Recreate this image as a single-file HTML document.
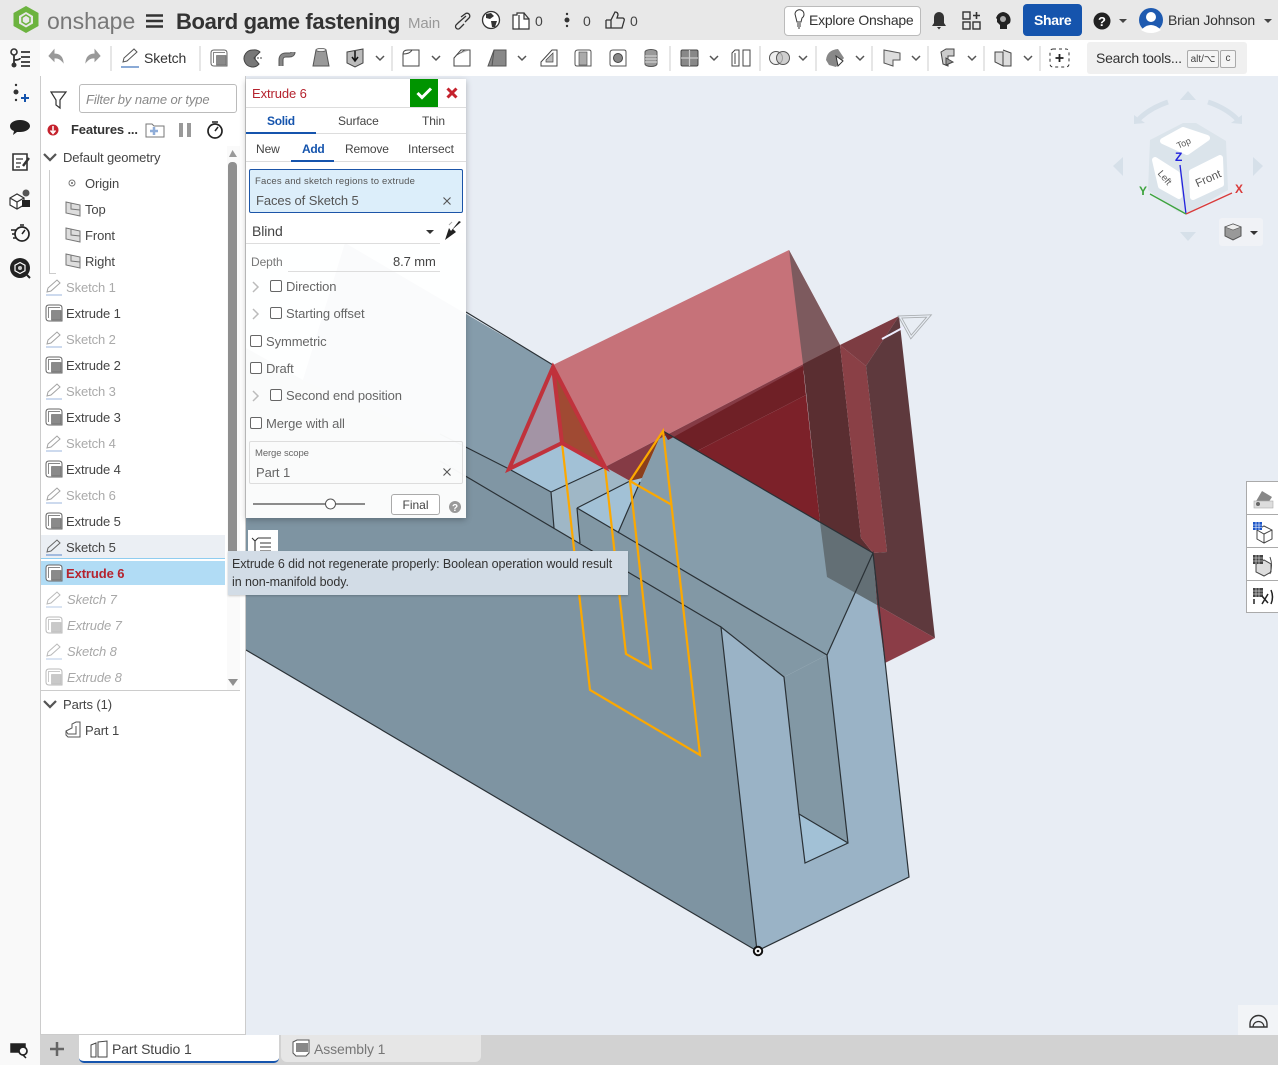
<!DOCTYPE html>
<html><head><meta charset="utf-8">
<style>
html,body{margin:0;padding:0;width:1278px;height:1065px;overflow:hidden;background:#e8edf4;font-family:"Liberation Sans",sans-serif;color:#444}
.a{position:absolute}
.t{position:absolute;white-space:nowrap;line-height:16px;font-size:13px;letter-spacing:-.1px}
.g{color:#aaa}.i{color:#a8a8a8;font-style:italic}
.cb{position:absolute;width:10px;height:10px;border:1px solid #666;border-radius:2px;background:#fff}
svg{position:absolute;left:0;top:0}
</style></head><body>

<svg width="1278" height="1065" viewBox="0 0 1278 1065">
<polygon points="345,243 553,365 509,469 551,492 554,528 721,627 757,951 246,650 246,348 303,380" fill="#7e94a2"/>
<polygon points="345,243 553,365 509,469 303,380" fill="#859cab"/>
<polygon points="466,447 509,469 551,492 554,528 466,476" fill="#8096a4"/>
<polygon points="551,492 605,467 630,481 577,508 580,543 554,528" fill="#9fb7c6"/>
<polygon points="509,469 562,443 605,467 551,492" fill="#a2c1d6"/>
<polygon points="577,508 630,481 645,475 618,533" fill="#a2c1d6"/>
<polygon points="577,508 827,655 784,677 721,627 580,543" fill="#8298a5"/>
<polygon points="663,430 873,553 827,655 618,533" fill="#869dab"/>
<polygon points="721,627 784,677 799,814 805,863 848,843 827,655 873,553 909,877 757,951" fill="#9ab3c6"/>
<polygon points="784,677 827,655 848,843 799,814" fill="#8298a5"/>
<polygon points="799,814 848,843 805,863" fill="#a2c1d6"/>
<!-- red body -->
<polygon points="553,365 789,250 840,345 605,467" fill="#c67279"/>
<polygon points="789,250 840,345 803,364" fill="#7d5a5e"/>
<polygon points="605,467 840,345 840,352 668,440 663,431 630,481" fill="#853b45"/>
<polygon points="668,440 803,366 806,395 697,451 663,431" fill="#6f2026"/>
<polygon points="697,451 806,395 820,522" fill="#7c2129"/>
<polygon points="803,364 840,345 861,538 873,553 820,522" fill="#5a2e31"/>
<polygon points="840,345 866,366 887,552 873,553 861,538" fill="#8a4046"/>
<polygon points="840,345 899,316 866,366" fill="#7d3c42"/>
<polygon points="899,316 935,638 877,605 873,553 887,552 866,366" fill="#5e393d"/>
<polygon points="877,605 935,638 885,663" fill="#8b3d47"/>
<polygon points="820,522 873,553 877,605 827,577" fill="#636f75"/>
<polygon points="630,481 663,430 642,478" fill="#8b3f1c"/>
<polygon points="553,365 509,469 562,443" fill="#a394a5"/>
<polygon points="553,365 562,443 605,467" fill="#a04a33"/>
<!-- edges -->
<g fill="none" stroke="#2a3136" stroke-width="1.2">
<path d="M246 650L757 951L909 877L873 553L827 655L848 843L805 863L799 814L784 677L721 627L757 951"/>
<path d="M466 312L553 365M440 434L509 469L551 492L605 467M551 492L554 528M440 461L721 627"/>
<path d="M577 508L630 481M577 508L580 543M577 508L827 655M618 533L640 482M663 431L873 553M799 814L848 843"/>
</g>
<!-- sketch -->
<g fill="none" stroke="#fca800" stroke-width="2.2">
<path d="M562 443L590 690L700 755L663 431L630 481L672 505"/>
<path d="M605 467L626 654L651 668L630 481"/>
</g>
<path d="M553 367L509 469L562 443L605 467Z M553 367L562 443" fill="none" stroke="#c0323c" stroke-width="4"/>
<circle cx="758" cy="951" r="4.2" fill="#fff" stroke="#111" stroke-width="2"/><circle cx="758" cy="951" r="1.3" fill="#111"/>
<!-- manipulator -->
<path d="M882 339L906 326" stroke="#eef" stroke-width="2"/>
<path d="M900 317L929 316L911 337Z" fill="none" stroke="#a9adb0" stroke-width="3"/>
<path d="M900 317L929 316L911 337Z" fill="none" stroke="#e8edf4" stroke-width="1.3"/>
<!-- nav cube -->
<g fill="#d6e0e9">
<path d="M1188 91L1180 100H1196ZM1188 241L1180 232H1196ZM1113 166L1123 157V176ZM1263 166L1253 157V176Z"/>
<path d="M1134 124V115L1145 123ZM1242 124V115L1231 123Z"/>
<polygon points="1150,140 1183,123 1196,123 1226,141 1228,190 1190,212 1178,212 1148,190" fill="#dbe4eb"/>
</g>
<path d="M1168 102Q1150 108 1139 119M1208 102Q1226 108 1237 119" fill="none" stroke="#d6e0e9" stroke-width="5"/>
<g fill="#fff" stroke="#fff" stroke-width="6" stroke-linejoin="round">
<path d="M1163 141L1183 130L1207 138L1187 152Z"/>
<path d="M1155 160L1177 174L1179 196L1161 186Z"/>
<path d="M1192 172L1220 158L1221 184L1193 197Z"/>
</g>
<text x="1176" y="146" font-size="9" fill="#555" transform="rotate(-24 1184 142)" font-family="Liberation Sans">Top</text>
<text x="1157" y="180" font-size="9.5" fill="#555" transform="rotate(50 1164 177)" font-family="Liberation Sans">Left</text>
<text x="1194" y="183" font-size="11.5" fill="#555" transform="rotate(-24 1206 177)" font-family="Liberation Sans">Front</text>
<path d="M1186 214L1180 165" stroke="#2222dd" stroke-width="1.3"/><path d="M1186 214L1232 193" stroke="#d93a3a" stroke-width="1.3"/><path d="M1186 214L1150 194" stroke="#3da33d" stroke-width="1.3"/>
<text x="1175" y="161" font-size="12" font-weight="bold" fill="#2222dd" font-family="Liberation Sans">Z</text>
<text x="1235" y="193" font-size="12" font-weight="bold" fill="#d93a3a" font-family="Liberation Sans">X</text>
<text x="1139" y="195" font-size="12" font-weight="bold" fill="#3da33d" font-family="Liberation Sans">Y</text>
<rect x="1219" y="218" width="44" height="28" rx="3" fill="#f0f2f6"/>
<path d="M1233 224L1241 227V236L1233 240L1225 236V227Z" fill="#999" stroke="#555"/><path d="M1225 227L1233 230L1241 227L1233 224Z" fill="#eee" stroke="#555" stroke-width=".6"/>
<path d="M1250 231H1258L1254 235Z" fill="#333"/>
</svg>

<!-- top bar -->
<div class="a" style="left:0;top:0;width:1278px;height:40px;background:#e8e8e8"></div>
<div class="a" style="left:0;top:40px;width:1278px;height:36px;background:#fff"></div>
<div class="a" style="left:0;top:40px;width:40px;height:1025px;background:#f9f9f9"></div>
<div class="t" style="left:47px;top:8px;font-size:23px;line-height:26px;color:#777;letter-spacing:0">onshape</div>
<div class="t" style="left:176px;top:9px;font-size:22px;line-height:26px;font-weight:bold;color:#333;letter-spacing:-.35px">Board game fastening</div>
<div class="t" style="left:408px;top:16px;font-size:15px;color:#999">Main</div>
<div class="t" style="left:535px;top:13px;font-size:14px;color:#444">0</div>
<div class="t" style="left:583px;top:13px;font-size:14px;color:#444">0</div>
<div class="t" style="left:630px;top:13px;font-size:14px;color:#444">0</div>
<div class="a" style="left:784px;top:6px;width:135px;height:28px;background:#fff;border:1px solid #bbb;border-radius:4px"></div>
<div class="t" style="left:809px;top:12px;font-size:14px;color:#333;letter-spacing:-.25px">Explore Onshape</div>
<div class="a" style="left:1023px;top:4px;width:59px;height:32px;background:#1554ad;border-radius:4px"></div>
<div class="t" style="left:1034px;top:12px;font-size:14px;color:#fff;font-weight:bold;letter-spacing:-.3px">Share</div>
<div class="t" style="left:1168px;top:12px;font-size:14px;color:#333;letter-spacing:-.2px">Brian Johnson</div>
<div class="t" style="left:144px;top:50px;font-size:14px;color:#333;letter-spacing:-.1px">Sketch</div>
<div class="a" style="left:1087px;top:42px;width:160px;height:32px;background:#f0f0f0;border-radius:3px"></div>
<div class="t" style="left:1096px;top:50px;font-size:14px;color:#333;letter-spacing:-.25px">Search tools...</div>
<div class="a" style="left:1187px;top:50px;width:32px;height:18px;background:#f4f4f4;border:1px solid #aaa;border-radius:2px;box-sizing:border-box;font-size:10px;line-height:17px;text-align:center;color:#444">alt/⌥</div>
<div class="a" style="left:1220px;top:50px;width:16px;height:18px;background:#f4f4f4;border:1px solid #aaa;border-radius:2px;box-sizing:border-box;font-size:10px;line-height:16px;text-align:center;color:#444">c</div>

<!-- feature panel -->
<div class="a" style="left:40px;top:76px;width:206px;height:959px;background:#fff;border-left:1px solid #ccc;border-right:1px solid #ccc;border-bottom:1px solid #ccc;box-sizing:border-box"></div>
<div class="a" style="left:79px;top:84px;width:158px;height:29px;border:1px solid #bbb;border-radius:3px;box-sizing:border-box"></div>
<div class="t" style="left:86px;top:92px;font-style:italic;color:#888">Filter by name or type</div>
<div class="t" style="left:71px;top:122px;font-size:13px;color:#333;font-weight:bold;letter-spacing:-.15px">Features ...</div>
<div class="a" style="left:227px;top:146px;width:13px;height:544px;background:#fafafa"></div>
<div class="a" style="left:228px;top:162px;width:9px;height:395px;background:#8f8f8f;border-radius:4px 4px 0 0"></div>
<div class="a" style="left:41px;top:535px;width:184px;height:23px;background:#ebeff4"></div>
<div class="a" style="left:41px;top:558px;width:184px;height:1px;background:#8fcdf0"></div>
<div class="a" style="left:41px;top:561px;width:184px;height:24px;background:#b1dcf5"></div>
<div class="a" style="left:41px;top:690px;width:199px;height:1px;background:#ccc"></div>
<div class="a" style="left:49px;top:170px;width:1px;height:104px;background:#ccc"></div>
<div class="a" style="left:49px;top:273px;width:7px;height:1px;background:#ccc"></div>
<div class="t" style="left:63px;top:150px">Default geometry</div>
<div class="t" style="left:85px;top:176px">Origin</div>
<div class="t" style="left:85px;top:202px">Top</div>
<div class="t" style="left:85px;top:228px">Front</div>
<div class="t" style="left:85px;top:254px">Right</div>
<div class="t g" style="left:66px;top:280px">Sketch 1</div>
<div class="t" style="left:66px;top:306px">Extrude 1</div>
<div class="t g" style="left:66px;top:332px">Sketch 2</div>
<div class="t" style="left:66px;top:358px">Extrude 2</div>
<div class="t g" style="left:66px;top:384px">Sketch 3</div>
<div class="t" style="left:66px;top:410px">Extrude 3</div>
<div class="t g" style="left:66px;top:436px">Sketch 4</div>
<div class="t" style="left:66px;top:462px">Extrude 4</div>
<div class="t g" style="left:66px;top:488px">Sketch 6</div>
<div class="t" style="left:66px;top:514px">Extrude 5</div>
<div class="t" style="left:66px;top:540px">Sketch 5</div>
<div class="t" style="left:66px;top:566px;color:#b5232e;font-weight:bold">Extrude 6</div>
<div class="t i" style="left:67px;top:592px">Sketch 7</div>
<div class="t i" style="left:67px;top:618px">Extrude 7</div>
<div class="t i" style="left:67px;top:644px">Sketch 8</div>
<div class="t i" style="left:67px;top:670px">Extrude 8</div>
<div class="t" style="left:63px;top:697px">Parts (1)</div>
<div class="t" style="left:85px;top:723px">Part 1</div>

<!-- dialog -->
<div class="a" style="left:246px;top:79px;width:220px;height:439px;background:rgba(255,255,255,.96);box-shadow:0 2px 6px rgba(0,0,0,.25)"></div>
<div class="a" style="left:246px;top:79px;width:220px;height:164px;background:#fff"></div>
<div class="a" style="left:410px;top:79px;width:28px;height:28px;background:#009400"></div>
<div class="a" style="left:246px;top:107px;width:220px;height:1px;background:#ddd"></div>
<div class="a" style="left:246px;top:133px;width:220px;height:1px;background:#ddd"></div>
<div class="a" style="left:246px;top:132px;width:70px;height:2px;background:#1554ad"></div>
<div class="a" style="left:246px;top:161px;width:220px;height:1px;background:#ddd"></div>
<div class="a" style="left:291px;top:160px;width:43px;height:2px;background:#1554ad"></div>
<div class="t" style="left:252px;top:86px;color:#b5232e">Extrude 6</div>
<div class="t" style="left:267px;top:113px;font-size:12px;color:#1554ad;font-weight:bold;letter-spacing:-.3px">Solid</div>
<div class="t" style="left:338px;top:113px;font-size:12px;letter-spacing:-.1px">Surface</div>
<div class="t" style="left:422px;top:113px;font-size:12px">Thin</div>
<div class="t" style="left:256px;top:141px;font-size:12px">New</div>
<div class="t" style="left:302px;top:141px;font-size:12px;color:#1554ad;font-weight:bold;letter-spacing:-.3px">Add</div>
<div class="t" style="left:345px;top:141px;font-size:12px;letter-spacing:-.15px">Remove</div>
<div class="t" style="left:408px;top:141px;font-size:12px;letter-spacing:0">Intersect</div>
<div class="a" style="left:249px;top:169px;width:214px;height:44px;background:#dceefa;border:1px solid #1c55a8;border-radius:2px;box-sizing:border-box"></div>
<div class="t" style="left:255px;top:174px;font-size:9.5px;color:#555;letter-spacing:.2px">Faces and sketch regions to extrude</div>
<div class="t" style="left:256px;top:193px;font-size:13px;color:#555;letter-spacing:-.08px">Faces of Sketch 5</div>
<div class="t" style="left:252px;top:223px;font-size:14px;color:#444">Blind</div>
<div class="a" style="left:246px;top:243px;width:194px;height:1px;background:#ddd"></div>
<div class="t" style="left:251px;top:254px;font-size:12px;color:#777">Depth</div>
<div class="a" style="left:288px;top:271px;width:152px;height:1px;background:#ddd"></div>
<div class="t" style="left:393px;top:254px;font-size:13px;color:#444">8.7 mm</div>
<div class="cb" style="left:270px;top:280px"></div><div class="t" style="left:286px;top:279px;color:#666">Direction</div>
<div class="cb" style="left:270px;top:307px"></div><div class="t" style="left:286px;top:306px;color:#666">Starting offset</div>
<div class="cb" style="left:250px;top:335px"></div><div class="t" style="left:266px;top:334px;color:#666">Symmetric</div>
<div class="cb" style="left:250px;top:362px"></div><div class="t" style="left:266px;top:361px;color:#666">Draft</div>
<div class="cb" style="left:270px;top:389px"></div><div class="t" style="left:286px;top:388px;color:#666">Second end position</div>
<div class="cb" style="left:250px;top:417px"></div><div class="t" style="left:266px;top:416px;color:#666">Merge with all</div>
<div class="a" style="left:249px;top:441px;width:214px;height:43px;border:1px solid #ddd;border-radius:2px;box-sizing:border-box"></div>
<div class="t" style="left:255px;top:446px;font-size:9.5px;color:#666">Merge scope</div>
<div class="t" style="left:256px;top:465px;color:#666">Part 1</div>
<div class="a" style="left:391px;top:494px;width:49px;height:21px;background:#fff;border:1px solid #aaa;border-radius:3px;box-sizing:border-box;font-size:12px;line-height:20px;text-align:center;color:#444">Final</div>

<!-- other chrome -->
<div class="a" style="left:248px;top:530px;width:30px;height:24px;background:#fff"></div>
<div class="a" style="left:1246px;top:481px;width:32px;height:132px;background:#fff;border:1px solid #aaa;border-right:0;box-sizing:border-box"></div>
<div class="a" style="left:1246px;top:514px;width:32px;height:1px;background:#aaa"></div>
<div class="a" style="left:1246px;top:547px;width:32px;height:1px;background:#aaa"></div>
<div class="a" style="left:1246px;top:580px;width:32px;height:1px;background:#aaa"></div>
<div class="a" style="left:1238px;top:1005px;width:40px;height:30px;background:#f2f4f7"></div>
<div class="a" style="left:40px;top:1035px;width:1238px;height:30px;background:#d2d2d2"></div>
<div class="a" style="left:79px;top:1035px;width:200px;height:28px;background:#fff;border-bottom:2px solid #1554ad;border-radius:0 0 5px 5px;box-sizing:border-box"></div>
<div class="a" style="left:281px;top:1035px;width:200px;height:27px;background:#e6e6e6;border-radius:0 0 6px 6px"></div>
<div class="t" style="left:112px;top:1041px;font-size:14px;color:#444;letter-spacing:-.1px">Part Studio 1</div>
<div class="t" style="left:314px;top:1041px;font-size:14px;color:#777;letter-spacing:-.1px">Assembly 1</div>

<!-- icons -->
<svg width="1278" height="1065" viewBox="0 0 1278 1065">
<defs>
<g id="sk"><path d="M-7 4L-6 0L3 -8L6 -5L-3 3Z" fill="none" stroke="#666"/><path d="M-8 7H8" stroke="#5a86c8"/></g>
<g id="ex"><path d="M-8 -5Q-8 -8 -5 -8H5Q8 -8 8 -5V8H-5Q-8 8 -8 5Z" fill="#fff" stroke="#666"/><path d="M-5.500 5V-5.500H6" fill="none" stroke="#888"/><rect x="-2.500" y="-2.500" width="9.500" height="9.500" fill="#8a8a8a" stroke="#666" stroke-width=".6"/></g>
<g id="pl"><path d="M-7 -7L7 -4V7L-7 4Z" fill="#ddd" stroke="#777"/><path d="M-2 -6V0L7 1" fill="none" stroke="#777"/></g>
<path id="ch" d="M-4 -2L0 2L4 -2" fill="none" stroke="#555" stroke-width="1.5"/>
<g id="g1"><path d="M-8 -5Q-8 -8 -5 -8H6Q8 -8 8 -6V8H-6Q-8 8 -8 6Z" fill="#fff" stroke="#555"/></g>
</defs>
<!-- logo -->
<path d="M26 6L38.500 13V26L26 33L13.500 26V13Z" fill="#6cb33f"/><path d="M26 12L33 16V23.500L26 27.500L19 23.500V16Z" fill="#e8e8e8"/><path d="M26 15L30 17.500V22L26 24.500L22 22V17.500Z" fill="none" stroke="#6cb33f" stroke-width="1.500"/>
<path d="M146 15.5H163M146 21H163M146 26.5H163" stroke="#333" stroke-width="2.4"/>
<!-- top icons -->
<path d="M461 23L458 26a2.5 2.5 0 0 0 4 3L466 25M463 18L467 15a2.5 2.5 0 0 1 4 4L467 23M460 24L468 17" transform="translate(-2 -1)" fill="none" stroke="#333" stroke-width="1.3"/>
<circle cx="491" cy="20" r="8.5" fill="#fff" stroke="#333" stroke-width="1.3"/><path d="M486 14L491 13L494 16L490 19L486 18ZM491 21L497 21L495 27L492 27Z" fill="#333"/>
<path d="M513 15V29H529V19H524V13H517V15Z" fill="#fff" stroke="#333" stroke-width="1.2"/><path d="M519 15V29M524 13L529 19" fill="none" stroke="#333" stroke-width="1.2"/>
<circle cx="567" cy="20" r="2.5" fill="#333"/><circle cx="567" cy="14" r="1.2" fill="#333"/><circle cx="567" cy="26" r="1.2" fill="#333"/>
<path d="M606 20H611L615 12Q618 12 618 15L617 18H623Q625 19 624 21L622 28H611V20M606 20V28H611" fill="none" stroke="#333" stroke-width="1.3"/>
<path d="M795 14a4.5 4.5 0 1 1 7 4l-1 4h-4l-1-4Z" fill="#fff" stroke="#333"/><path d="M797 24H801M797 26H801M798 28H800" stroke="#333"/>
<path d="M939 12a5 5 0 0 1 5 5v6l2 3H932l2-3v-6a5 5 0 0 1 5-5ZM937 27h4l-2 2.5Z" fill="#333"/>
<rect x="963" y="12" width="7" height="7" fill="none" stroke="#333" stroke-width="1.4"/><rect x="963" y="22" width="7" height="7" fill="none" stroke="#333" stroke-width="1.4"/><rect x="973" y="22" width="7" height="7" fill="none" stroke="#333" stroke-width="1.4"/><path d="M976.5 12V19M973 15.5H980" stroke="#333" stroke-width="1.6"/>
<path d="M1003 12a8 8 0 0 1 7 11l-3 2v4h-7v-4l-3-3v-3l-1-1a8 8 0 0 1 7-6Z" fill="#222"/><circle cx="1003" cy="19" r="3" fill="#aaa"/>
<circle cx="1102" cy="21" r="8.5" fill="#222"/><text x="1098" y="26" font-size="13" font-weight="bold" fill="#fff" font-family="Liberation Sans">?</text>
<path d="M1119 19H1127L1123 23Z" fill="#444"/>
<circle cx="1151" cy="20" r="12" fill="#1e5ab0"/><circle cx="1151" cy="17" r="5" fill="#fff"/><path d="M1141 30Q1151 20 1161 30Q1151 36 1141 30Z" fill="#fff"/>
<path d="M1264 19H1272L1268 23Z" fill="#444"/>
<!-- rail -->
<circle cx="14" cy="52" r="3" fill="none" stroke="#333" stroke-width="1.6"/><circle cx="14" cy="65" r="2.5" fill="#333"/><path d="M14 55V63M14 60Q20 60 20 58M21 52H30M21 57H30M21 62H30M21 66H30" fill="none" stroke="#333" stroke-width="1.8"/>
<circle cx="16" cy="92" r="2.5" fill="#333"/><circle cx="16" cy="85" r="1.2" fill="#333"/><circle cx="16" cy="100" r="1.2" fill="#333"/><path d="M21 98H29M25 94V102" stroke="#1554ad" stroke-width="2"/>
<path d="M20 120c6 0 10 3 10 6s-4 6-10 6h-3l-4 3 1-4c-3-1-4-3-4-5 0-3 4-6 10-6Z" fill="#222"/>
<path d="M13 154H27V170H13Z" fill="#fff" stroke="#333" stroke-width="1.6"/><path d="M16 159H23M16 163H21M16 167H20" stroke="#333" stroke-width="1.3"/><path d="M23 166L29 158" stroke="#333" stroke-width="2.4"/>
<path d="M10 198L17 194L24 198V205L17 209L10 205ZM10 198L17 202L24 198M17 202V209" fill="#fff" stroke="#333" stroke-width="1.2"/><rect x="22" y="200" width="8" height="7" fill="#222"/><circle cx="26" cy="193" r="3.5" fill="#555"/>
<circle cx="22" cy="234" r="7" fill="none" stroke="#222" stroke-width="1.7"/><path d="M20 225H24M22 234L25 230M11 230H16M12 234H15M13 238H16" stroke="#222" stroke-width="1.5"/>
<circle cx="20" cy="268" r="10" fill="#222"/><path d="M20 262.500L25 265.200V270.800L20 273.500L15 270.800V265.200Z" fill="none" stroke="#fff" stroke-width="1.200"/><circle cx="20" cy="268" r="2" fill="#ccc"/><path d="M27 275L30 278" stroke="#222" stroke-width="2"/>
<path d="M11 1044H25V1052H11ZM21 1053l5 5" fill="#222" stroke="#222" stroke-width="1.5"/><circle cx="23" cy="1051" r="4" fill="#f9f9f9" stroke="#222" stroke-width="1.7"/>
<!-- toolbar -->
<g stroke="#ccc"><path d="M111 46V71M200 46V71M392 46V71M670 46V71M760 46V71M816 46V71M872 46V71M928 46V71M984 46V71M1040 46V71"/></g>
<path d="M63 62Q62 54 54 54V50L49 56L54 61V58Q59 57 63 62Z" fill="#999" stroke="#999"/><path d="M86 62Q87 54 95 54V50L100 56L95 61V58Q90 57 86 62Z" fill="#999" stroke="#999"/>
<g transform="translate(130 58)"><path d="M-7 4L-6 0L4 -9L7 -6L-3 3Z" fill="none" stroke="#555"/><path d="M-9 9H9" stroke="#1554ad"/></g>
<use href="#ex" x="219" y="58"/>
<path d="M253 50a8.5 8.5 0 1 0 6 14L254 58L260 52a8 8 0 0 0 -7 -2Z" fill="#777" stroke="#444"/><path d="M254 58H263" stroke="#444" stroke-dasharray="2 1"/>
<path d="M281 66V60Q281 55 286 55H289Q293 55 293 52" fill="none" stroke="#555" stroke-width="5"/><path d="M281 66V60Q281 55 286 55H289Q293 55 293 52" fill="none" stroke="#888" stroke-width="3"/>
<path d="M316 50H326L329 66H313Z" fill="#999" stroke="#555"/><ellipse cx="321" cy="50" rx="5" ry="1.6" fill="#eee" stroke="#555" stroke-width=".8"/>
<path d="M347 52L363 49V63L355 67L347 63Z" fill="#bbb" stroke="#444"/><path d="M355 51V60M352 57L355 61L358 57" fill="none" stroke="#111" stroke-width="1.5"/>
<use href="#ch" x="380" y="58"/>
<path d="M403 66V54Q403 50 408 50H419V66Z" fill="#fff" stroke="#444"/><path d="M403 54Q410 54 412 50" fill="none" stroke="#444"/>
<use href="#ch" x="436" y="58"/>
<path d="M454 58L461 50H470V66H454Z" fill="#fff" stroke="#444"/><path d="M457 55L465 50H470" fill="#bbb" stroke="#444" stroke-width=".7"/>
<path d="M488 66L494 50H506V66Z" fill="#888" stroke="#555"/><path d="M494 50L492 66" stroke="#555"/>
<use href="#ch" x="522" y="58"/>
<path d="M541 62L552 50H557V66H541Z" fill="#fff" stroke="#444"/><path d="M546 60L553 53V62H546Z" fill="#bbb" stroke="#444" stroke-width=".7"/>
<use href="#g1" x="583" y="58"/><rect x="579" y="52" width="8" height="13" fill="#aaa" stroke="#555" stroke-width=".7"/>
<use href="#g1" x="618" y="58"/><circle cx="618" cy="58" r="4.5" fill="#888" stroke="#444"/>
<path d="M645 52a6 2.5 0 0 1 12 0V64a6 2.5 0 0 1 -12 0Z" fill="#999" stroke="#555"/><path d="M645 56H657M645 59H657M645 62H657" stroke="#ddd"/>
<rect x="681" y="50" width="17" height="16" fill="#888" stroke="#444" rx="1.5"/><path d="M689.500 50V66M681 58H698" stroke="#ccc" stroke-width="1.2"/>
<use href="#ch" x="714" y="58"/>
<path d="M732 53L735 50H739V66H732ZM743 50H750V66H743V56Z" fill="#fff" stroke="#444"/><path d="M735 53V64" stroke="#444"/>
<circle cx="776" cy="58" r="6.500" fill="#eee" stroke="#555"/><circle cx="783" cy="58" r="6.500" fill="#bbb" fill-opacity=".7" stroke="#555"/>
<use href="#ch" x="803" y="58"/>
<path d="M826 60Q827 50 838 49L844 58L836 67L829 65Z" fill="#888"/><path d="M836 56L843 61L838 66Z" fill="#fff" stroke="#333"/>
<use href="#ch" x="860" y="58"/>
<path d="M884 50L900 53V60H893V66L884 63Z" fill="#ddd" stroke="#555"/>
<use href="#ch" x="916" y="58"/>
<path d="M941 52L946 49H954V56H948V66L943 64Z" fill="#ccc" stroke="#444"/><path d="M946 58L953 62L946 65Z" fill="#999" stroke="#444"/>
<use href="#ch" x="972" y="58"/>
<path d="M995 52H1003V66L995 62ZM1003 50L1011 53V66H1003" fill="#ddd" stroke="#444"/>
<use href="#ch" x="1028" y="58"/>
<rect x="1050" y="49" width="19" height="18" rx="3" fill="none" stroke="#333" stroke-dasharray="3 3"/><path d="M1055.500 58H1063.500M1059.500 54V62" stroke="#222" stroke-width="1.8"/>
<!-- filter row -->
<path d="M51 92H66L60 100V108L56 105V100Z" fill="#fff" stroke="#333" stroke-width="1.2"/>
<circle cx="53" cy="130" r="5.500" fill="#c5222d"/><path d="M53 126V132M50.500 130.500L53 133.500L55.500 130.500" stroke="#fff" stroke-width="1.500" fill="none"/>
<path d="M146 124H152L154 126H164V137H146Z" fill="#fff" stroke="#777"/><path d="M150 131H158M154 127V135" stroke="#8fadd8" stroke-width="2.500"/>
<rect x="179" y="123" width="4" height="14" fill="#999"/><rect x="187" y="123" width="4" height="14" fill="#999"/>
<circle cx="215" cy="131" r="7" fill="#fff" stroke="#222" stroke-width="1.700"/><path d="M212 122H218M215 131L218 127" stroke="#222" stroke-width="1.500"/>
<path d="M229 157L232.500 150L237 157Z" fill="#999"/><path d="M228 679H238L233 686Z" fill="#8f8f8f"/>
<use href="#ch" x="50" y="157" transform="translate(-25 -78.500) scale(1.500)"/>
<use href="#ch" x="50" y="704" transform="translate(-25 -352) scale(1.500)"/>
<circle cx="72" cy="183" r="3" fill="none" stroke="#777"/><circle cx="72" cy="183" r="1" fill="#666"/>
<use href="#pl" x="73" y="209"/><use href="#pl" x="73" y="235"/><use href="#pl" x="73" y="261"/>
<g opacity=".6"><use href="#sk" x="54" y="288"/><use href="#sk" x="54" y="340"/><use href="#sk" x="54" y="392"/><use href="#sk" x="54" y="444"/><use href="#sk" x="54" y="496"/></g>
<use href="#ex" x="54" y="313"/><use href="#ex" x="54" y="365"/><use href="#ex" x="54" y="417"/><use href="#ex" x="54" y="469"/><use href="#ex" x="54" y="521"/>
<use href="#sk" x="54" y="548"/><use href="#ex" x="54" y="573"/>
<g opacity=".45"><use href="#sk" x="54" y="600"/><use href="#ex" x="54" y="625"/><use href="#sk" x="54" y="652"/><use href="#ex" x="54" y="677"/></g>
<path d="M66 731L72 728V724L76 722H80V737H68L66 735ZM66 731L68 734H76V726" fill="#fff" stroke="#555"/>
<!-- dialog -->
<path d="M417.500 93L422 97.500L431 88.500" fill="none" stroke="#fff" stroke-width="3"/>
<path d="M447.500 88.500L456.500 97.500M456.500 88.500L447.500 97.500" stroke="#c5222d" stroke-width="3"/>
<path d="M443.500 197.500L450.500 204.500M450.500 197.500L443.500 204.500M443.500 468.500L450.500 475.500M450.500 468.500L443.500 475.500" stroke="#555" stroke-width="1.100"/>
<path d="M426 230H434L430 234Z" fill="#333"/>
<path d="M461 222L453 229L456 232L445 240L449 228L451 231L459 221Z" fill="#222"/><path d="M449 225L452 222" stroke="#aaa"/>
<path d="M253 282L258 287L253 292M253 309L258 314L253 319M253 391L258 396L253 401" fill="none" stroke="#bbb" stroke-width="1.500"/>
<path d="M253 504H365" stroke="#666" stroke-width="1.500"/><circle cx="330.500" cy="504" r="5" fill="#fff" stroke="#555"/>
<circle cx="455" cy="507" r="6" fill="#999"/><text x="452" y="511" font-size="10" font-weight="bold" fill="#fff" font-family="Liberation Sans">?</text>
<!-- list icon -->
<path d="M258 538H271M260 543H271M260 547H271M260 551H271M252 538L255 541L258 538M255 541V551" fill="none" stroke="#333" stroke-width="1.100"/>
<!-- right icons -->
<path d="M1255 503L1262 491L1272 497L1268 503Z" fill="#888"/><rect x="1254" y="501" width="19" height="7" fill="#ddd" stroke="#aaa" stroke-width=".6"/><circle cx="1258" cy="504" r="2" fill="#666"/>
<path d="M1257 530L1264 526L1272 530V539L1264 543L1257 539Z M1257 530L1264 534L1272 530M1264 534V543" fill="#fff" stroke="#444"/><rect x="1253" y="522" width="9" height="8" fill="#1c55c8"/><path d="M1253 525H1262M1253 527.500H1262M1256 522V530M1259 522V530" stroke="#fff" stroke-width=".6"/>
<path d="M1256 564L1264 560L1271 564V572L1264 576L1256 572Z" fill="#ddd" stroke="#444"/><rect x="1253" y="555" width="10" height="9" fill="#444"/><path d="M1253 558H1263M1253 561H1263M1256 555V564M1259 555V564" stroke="#fff" stroke-width=".5"/><path d="M1270 557Q1273 565 1270 574" fill="none" stroke="#444"/>
<rect x="1253" y="588" width="10" height="9" fill="#444"/><path d="M1253 591H1263M1253 594H1263M1256 588V597M1259 588V597" stroke="#fff" stroke-width=".5"/><path d="M1254 599V604M1262 604L1268 594M1262 596L1268 603M1271 590Q1274 597 1271 604" fill="none" stroke="#222" stroke-width="1.500"/>
<!-- gauge -->
<path d="M1250 1027V1024A8.500 8.500 0 0 1 1267 1024V1027Z" fill="none" stroke="#333" stroke-width="1.400"/><path d="M1253 1027A5.500 5.500 0 0 1 1264 1027" fill="none" stroke="#333" stroke-width="1.200"/>
<!-- tabs -->
<path d="M50 1049H64M57 1042V1056" stroke="#666" stroke-width="2.500"/>
<path d="M91 1045L96 1043V1057H91ZM98 1042L107 1041V1057H98Z" fill="#fff" stroke="#444"/>
<path d="M293 1042L297 1040H309V1053L306 1056H296L293 1053Z" fill="#fff" stroke="#555"/><rect x="296" y="1043" width="12" height="9" fill="#888"/>
</svg>

<!-- tooltip -->
<div class="a" style="left:228px;top:551px;width:400px;height:44px;background:#d2dce6;box-shadow:0 1px 2px rgba(0,0,0,.2)"></div>
<div class="t" style="left:232px;top:555px;font-size:12.5px;line-height:18px;color:#333;letter-spacing:-.08px">Extrude 6 did not regenerate properly: Boolean operation would result</div>
<div class="t" style="left:232px;top:573px;font-size:12.5px;line-height:18px;color:#333;letter-spacing:-.08px">in non-manifold body.</div>
</body></html>
